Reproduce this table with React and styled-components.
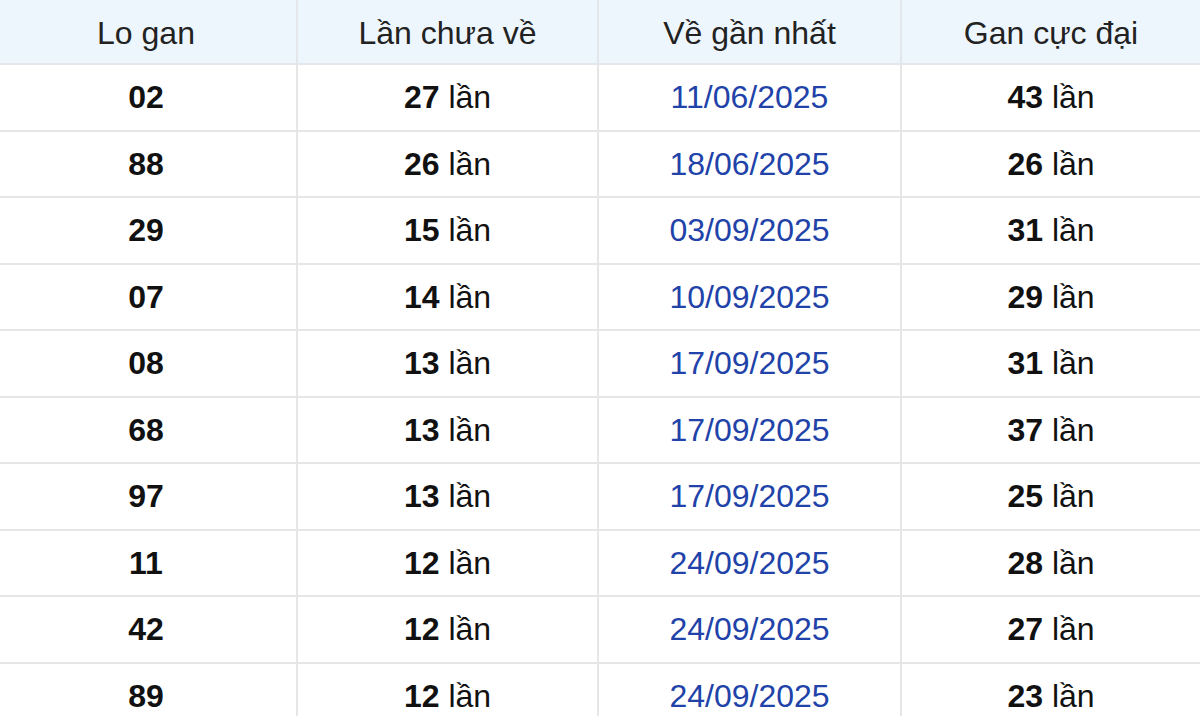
import React from 'react';
import styled, { createGlobalStyle } from 'styled-components';

const GlobalStyle = createGlobalStyle`
  html, body {
    margin: 0;
    padding: 0;
    background: #ffffff;
    font-family: "Liberation Sans", Arial, sans-serif;
  }
`;

const rows = [
  ['02', 27, '11/06/2025', 43],
  ['88', 26, '18/06/2025', 26],
  ['29', 15, '03/09/2025', 31],
  ['07', 14, '10/09/2025', 29],
  ['08', 13, '17/09/2025', 31],
  ['68', 13, '17/09/2025', 37],
  ['97', 13, '17/09/2025', 25],
  ['11', 12, '24/09/2025', 28],
  ['42', 12, '24/09/2025', 27],
  ['89', 12, '24/09/2025', 23]
];

const Wrap = styled.div`
  width: 1200px;
  height: 716px;
  overflow: hidden;
`;

const Table = styled.table`
  width: 1204px;
  margin-left: -4px;
  border-collapse: collapse;
  table-layout: fixed;
`;

const Col = styled.col`
  width: ${(p) => p.$w}px;
`;

const Head = styled.th`
  height: 60px;
  padding: 3px 0 0;
  background: #eef6fd;
  color: #222;
  font-weight: 400;
  font-size: 32px;
  text-align: center;
  border-bottom: 2px solid #e3e6ea;
  border-right: 2px solid #e3e6ea;

  &:last-child {
    border-right: none;
  }
`;

const Cell = styled.td`
  height: 63.5px;
  padding: 1px 0 0;
  text-align: center;
  font-size: 32px;
  color: ${(p) => (p.$date ? '#2142a8' : '#111')};
  border-bottom: 2px solid #e6e6e6;
  border-right: 2px solid #e6e6e6;

  &:last-child {
    border-right: none;
  }
`;

const Num = styled.b`
  font-weight: 700;
`;

const App = () => {
  return (
    <Wrap>
      <GlobalStyle />
      <Table>
        <colgroup>
          <Col $w={301} />
          <Col $w={301} />
          <Col $w={303} />
          <Col $w={299} />
        </colgroup>
        <thead>
          <tr>
            <Head>Lo gan</Head>
            <Head>Lần chưa về</Head>
            <Head>Về gần nhất</Head>
            <Head>Gan cực đại</Head>
          </tr>
        </thead>
        <tbody>
          {rows.map(([lo, miss, date, max]) => (
            <tr key={lo}>
              <Cell><Num>{lo}</Num></Cell>
              <Cell><Num>{miss}</Num> lần</Cell>
              <Cell $date>{date}</Cell>
              <Cell><Num>{max}</Num> lần</Cell>
            </tr>
          ))}
        </tbody>
      </Table>
    </Wrap>
  );
};

export default App;
